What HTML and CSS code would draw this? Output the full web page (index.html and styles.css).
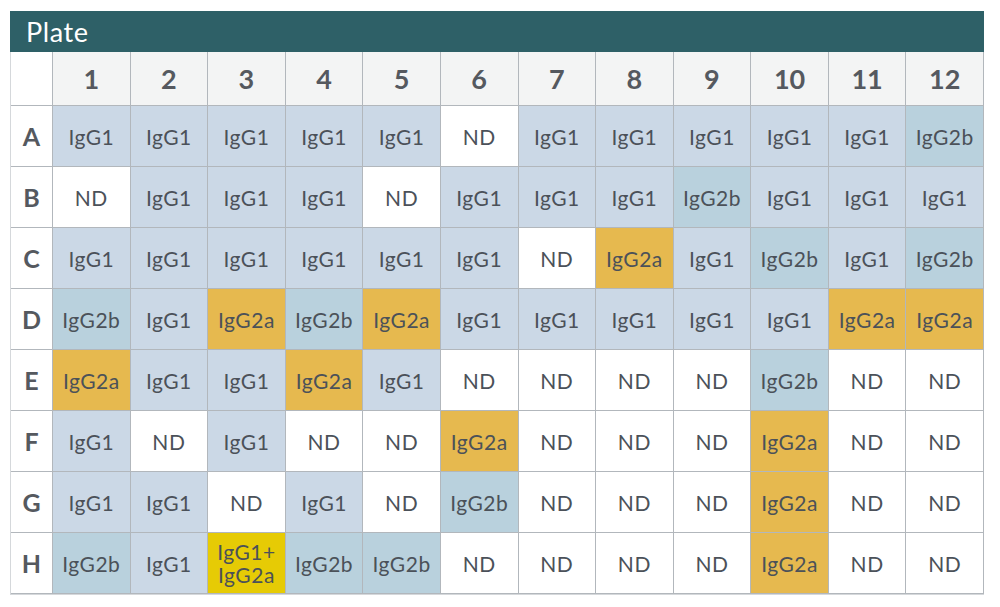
FILE: index.html
```html
<!DOCTYPE html>
<html>
<head>
<meta charset="utf-8">
<link rel="stylesheet" href="styles.css">
</head>
<body>
<div class="panel">
  <div class="title">Plate</div>
  <div class="plate">
    <div class="corner"></div>
    <div class="ch">1</div><div class="ch">2</div><div class="ch">3</div><div class="ch">4</div><div class="ch">5</div><div class="ch">6</div><div class="ch">7</div><div class="ch">8</div><div class="ch">9</div><div class="ch">10</div><div class="ch">11</div><div class="ch">12</div>

    <div class="rh">A</div>
    <div class="c g1">IgG1</div><div class="c g1">IgG1</div><div class="c g1">IgG1</div><div class="c g1">IgG1</div><div class="c g1">IgG1</div><div class="c nd">ND</div><div class="c g1">IgG1</div><div class="c g1">IgG1</div><div class="c g1">IgG1</div><div class="c g1">IgG1</div><div class="c g1">IgG1</div><div class="c g2b">IgG2b</div>

    <div class="rh">B</div>
    <div class="c nd">ND</div><div class="c g1">IgG1</div><div class="c g1">IgG1</div><div class="c g1">IgG1</div><div class="c nd">ND</div><div class="c g1">IgG1</div><div class="c g1">IgG1</div><div class="c g1">IgG1</div><div class="c g2b">IgG2b</div><div class="c g1">IgG1</div><div class="c g1">IgG1</div><div class="c g1">IgG1</div>

    <div class="rh">C</div>
    <div class="c g1">IgG1</div><div class="c g1">IgG1</div><div class="c g1">IgG1</div><div class="c g1">IgG1</div><div class="c g1">IgG1</div><div class="c g1">IgG1</div><div class="c nd">ND</div><div class="c g2a">IgG2a</div><div class="c g1">IgG1</div><div class="c g2b">IgG2b</div><div class="c g1">IgG1</div><div class="c g2b">IgG2b</div>

    <div class="rh">D</div>
    <div class="c g2b">IgG2b</div><div class="c g1">IgG1</div><div class="c g2a">IgG2a</div><div class="c g2b">IgG2b</div><div class="c g2a">IgG2a</div><div class="c g1">IgG1</div><div class="c g1">IgG1</div><div class="c g1">IgG1</div><div class="c g1">IgG1</div><div class="c g1">IgG1</div><div class="c g2a">IgG2a</div><div class="c g2a">IgG2a</div>

    <div class="rh">E</div>
    <div class="c g2a">IgG2a</div><div class="c g1">IgG1</div><div class="c g1">IgG1</div><div class="c g2a">IgG2a</div><div class="c g1">IgG1</div><div class="c nd">ND</div><div class="c nd">ND</div><div class="c nd">ND</div><div class="c nd">ND</div><div class="c g2b">IgG2b</div><div class="c nd">ND</div><div class="c nd">ND</div>

    <div class="rh">F</div>
    <div class="c g1">IgG1</div><div class="c nd">ND</div><div class="c g1">IgG1</div><div class="c nd">ND</div><div class="c nd">ND</div><div class="c g2a">IgG2a</div><div class="c nd">ND</div><div class="c nd">ND</div><div class="c nd">ND</div><div class="c g2a">IgG2a</div><div class="c nd">ND</div><div class="c nd">ND</div>

    <div class="rh">G</div>
    <div class="c g1">IgG1</div><div class="c g1">IgG1</div><div class="c nd">ND</div><div class="c g1">IgG1</div><div class="c nd">ND</div><div class="c g2b">IgG2b</div><div class="c nd">ND</div><div class="c nd">ND</div><div class="c nd">ND</div><div class="c g2a">IgG2a</div><div class="c nd">ND</div><div class="c nd">ND</div>

    <div class="rh">H</div>
    <div class="c g2b">IgG2b</div><div class="c g1">IgG1</div><div class="c mix">IgG1+<br>IgG2a</div><div class="c g2b">IgG2b</div><div class="c g2b">IgG2b</div><div class="c nd">ND</div><div class="c nd">ND</div><div class="c nd">ND</div><div class="c nd">ND</div><div class="c g2a">IgG2a</div><div class="c nd">ND</div><div class="c nd">ND</div>
  </div>
</div>
</body>
</html>
```

FILE: styles.css
```css
html, body {
  margin: 0;
  padding: 0;
  background: #ffffff;
}
body {
  font-family: Lato, "Liberation Sans", Arial, sans-serif;
  color: #4b5159;
}
.panel {
  margin: 11px 0 0 10px;
  width: 974px;
}
.title {
  height: 41px;
  background: #2e6067;
  color: #ffffff;
  font-size: 27px;
  letter-spacing: 0.6px;
  line-height: 42px;
  padding-left: 16px;
  box-sizing: border-box;
}
.plate {
  display: grid;
  grid-template-columns: 42px repeat(12, 1fr);
  grid-template-rows: 54px repeat(8, 61px);
  border-left: 1px solid #d5d8db;
  border-bottom: 1px solid #d5d8db;
  box-sizing: border-box;
}
.plate > div {
  display: flex;
  align-items: center;
  justify-content: center;
  border-right: 1px solid #b2b7bc;
  border-bottom: 1px solid #b2b7bc;
  text-align: center;
}
.corner {
  background: #ffffff;
}
.ch {
  background: #f3f4f4;
  font-size: 27px;
  font-weight: bold;
  color: #55595f;
}
.rh {
  background: #ffffff;
  font-size: 25px;
  font-weight: bold;
  color: #55595f;
}
.c {
  font-size: 21px;
  line-height: 23px;
  letter-spacing: 0.5px;
}
.g1 { background: #cbd8e6; }
.g2b { background: #b9d1dd; }
.g2a { background: #e6b94f; }
.mix { background: #e6cb05; }
.nd { background: #ffffff; }
```
